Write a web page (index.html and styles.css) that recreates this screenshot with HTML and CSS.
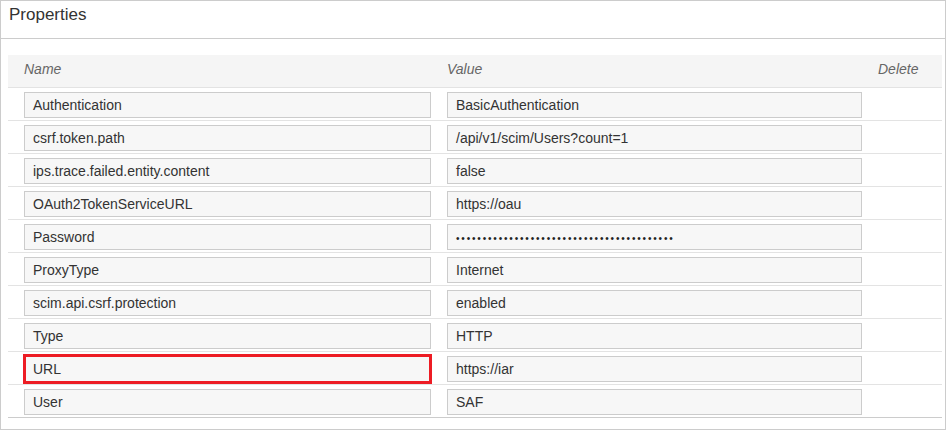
FILE: index.html
```html
<!DOCTYPE html>
<html>
<head>
<meta charset="utf-8">
<link rel="stylesheet" href="styles.css">
</head>
<body>
<div class="panel">
  <div class="panel-head">Properties</div>
  <div class="panel-body">
    <div class="table">
      <div class="row head">
        <div class="col-name">Name</div>
        <div class="col-value">Value</div>
        <div class="col-del">Delete</div>
      </div>
      <div class="row"><div class="field name">Authentication</div><div class="field value">BasicAuthentication</div></div>
      <div class="row"><div class="field name">csrf.token.path</div><div class="field value">/api/v1/scim/Users?count=1</div></div>
      <div class="row"><div class="field name">ips.trace.failed.entity.content</div><div class="field value">false</div></div>
      <div class="row"><div class="field name">OAuth2TokenServiceURL</div><div class="field value">https://oau</div></div>
      <div class="row"><div class="field name">Password</div><div class="field value"><span class="dots">•••••••••••••••••••••••••••••••••••••••••</span></div></div>
      <div class="row"><div class="field name">ProxyType</div><div class="field value">Internet</div></div>
      <div class="row"><div class="field name">scim.api.csrf.protection</div><div class="field value">enabled</div></div>
      <div class="row"><div class="field name">Type</div><div class="field value">HTTP</div></div>
      <div class="row"><div class="field name marked">URL</div><div class="field value">https://iar</div></div>
      <div class="row last"><div class="field name">User</div><div class="field value">SAF</div></div>
    </div>
  </div>
</div>
</body>
</html>
```

FILE: styles.css
```css
html, body {
  margin: 0;
  padding: 0;
  background: #fff;
}
body {
  font-family: "Liberation Sans", Arial, sans-serif;
  color: #333;
}
.panel {
  width: 946px;
  height: 430px;
  box-sizing: border-box;
  border: 1px solid #cccccc;
}
.panel-head {
  height: 38px;
  box-sizing: border-box;
  border-bottom: 1px solid #cccccc;
  padding: 4px 0 0 8px;
  font-size: 17px;
  line-height: 20px;
  color: #333;
}
.panel-body {
  padding: 16px 3px 0 7px;
}
.table {
  display: flex;
  flex-direction: column;
}
.row {
  display: flex;
  align-items: flex-start;
  height: 33px;
  box-sizing: border-box;
  padding: 4px 0 0 16px;
  border-bottom: 1px solid #e3e3e3;
}
.row.last {
  border-bottom-color: #cccccc;
}
.row.head {
  background: #f5f5f5;
  padding-top: 6px;
  font-style: italic;
  font-size: 14px;
  line-height: 16px;
  color: #666;
  border-bottom-color: #e3e3e3;
}
.col-name {
  width: 407px;
}
.col-value {
  width: 415px;
  margin-left: 16px;
}
.col-del {
  margin-left: 16px;
}
.field {
  position: relative;
  height: 26px;
  box-sizing: border-box;
  border: 1px solid #cccccc;
  background: #f7f7f7;
  padding: 0 8px;
  font-size: 14px;
  line-height: 24px;
  white-space: nowrap;
}
.field.name {
  width: 407px;
}
.field.value {
  width: 415px;
  margin-left: 16px;
}
.dots {
  font-size: 10px;
  letter-spacing: 1.83px;
  color: #222;
}
.marked::after {
  content: "";
  position: absolute;
  left: -2px;
  top: -3px;
  right: -2px;
  bottom: -3px;
  border: 3px solid #ed1c24;
  pointer-events: none;
}
```
